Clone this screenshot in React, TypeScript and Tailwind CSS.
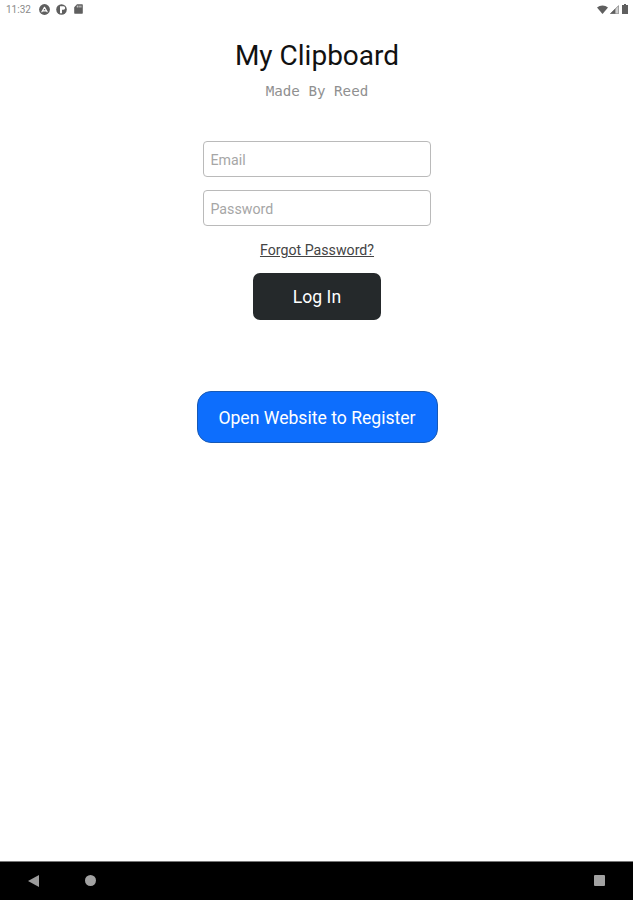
function StatusBar() {
    return (
        <div className="flex h-[18px] items-center justify-between pl-[6px] pr-1 text-[#5f5f5f]">
            <div className="flex items-center">
                <span className="w-[26px] whitespace-nowrap pt-px text-[10px] leading-[17px] text-[#8a8a8a]">11:32</span>
                <svg className="ml-[7px]" width="11" height="11" viewBox="0 0 11 11">
                    <circle cx="5.5" cy="5.5" r="5.4" fill="currentColor" />
                    <path d="M2.9 7.8 5.5 3.3l2.6 4.5M4.1 6.8h2.8" fill="none" stroke="#fff" strokeWidth="1.2" strokeLinecap="round" strokeLinejoin="round" />
                </svg>
                <svg className="ml-[6px]" width="11" height="11" viewBox="0 0 11 11">
                    <circle cx="5.5" cy="5.5" r="5.3" fill="currentColor" />
                    <path d="M4 2.2h3.4a1.8 1.8 0 0 1 0 3.6H6v3.4H4z" fill="#fff" />
                </svg>
                <svg className="ml-[7px]" width="9" height="10" viewBox="0 0 9 10">
                    <path d="M3 .3h5.2a.6.6 0 0 1 .6.6v8.2a.6.6 0 0 1-.6.6H.8a.6.6 0 0 1-.6-.6V3.2z" fill="currentColor" />
                    <path d="M3.3 1.6v1.9M5.1 1.6v1.9M6.9 1.6v1.9" stroke="#fff" strokeWidth=".8" />
                </svg>
            </div>
            <div className="flex items-center">
                <svg width="11" height="9" viewBox="0 0 11 9">
                    <path d="M0 2.4a8.5 8.5 0 0 1 11 0L5.5 9z" fill="currentColor" />
                </svg>
                <svg className="ml-[2px]" width="9" height="9" viewBox="0 0 9 9">
                    <path d="M8.7.2v8.6H.1z" fill="#d0d0d0" />
                    <path d="M5.4 3.5v5.3H.1z" fill="currentColor" />
                    <path d="M8.6.6v8.1H.5z" fill="none" stroke="currentColor" strokeWidth=".5" />
                </svg>
                <svg className="ml-[3px] mr-px" width="6" height="10" viewBox="0 0 6 10">
                    <path d="M2 0h2v1h2v9H0V1h2z" fill="currentColor" />
                </svg>
            </div>
        </div>
    );
}

function NavBar() {
    return (
        <div className="flex h-[39px] items-center justify-between border-t border-[#777] bg-black pb-px pl-[28px] pr-[28px] text-[#9c9c9c]">
            <div className="flex items-center">
                <svg width="11" height="12" viewBox="0 0 11 12">
                    <path d="M11 0v12L0 6z" fill="currentColor" />
                </svg>
                <div className="ml-[46px] h-[11px] w-[11px] rounded-full bg-[#a2a2a2]" />
            </div>
            <div className="h-[11px] w-[11px] rounded-[1px] bg-[#a2a2a2]" />
        </div>
    );
}

export default function App() {
    return (
        <div className="flex h-[900px] w-[633px] flex-col overflow-hidden bg-white font-['Roboto',sans-serif]">
            <StatusBar />

            <main className="flex flex-1 flex-col items-center pl-px pt-[20px]">
                <h1 className="text-[28px] leading-[36px] text-[#111]">My Clipboard</h1>
                <p className="mt-[7px] font-['DejaVu_Sans_Mono',monospace] text-[14.2px] leading-[20px] text-[#909090]">
                    Made By Reed
                </p>

                <input
                    type="email"
                    placeholder="Email"
                    className="mt-[40px] h-[36px] w-[228px] rounded-[4px] border border-[#bababa] px-[6.5px] pt-[2px] text-[14.2px] text-[#222] placeholder:text-[#a6a6a6]"
                />
                <input
                    type="password"
                    placeholder="Password"
                    className="mt-[13px] h-[36px] w-[228px] rounded-[4px] border border-[#bababa] px-[6.5px] pt-[2px] text-[14.2px] text-[#222] placeholder:text-[#a6a6a6]"
                />

                <a className="mt-[14px] text-[14.2px] leading-[20px] text-[#444] underline">Forgot Password?</a>

                <button className="mt-[13px] h-[47px] w-[128px] rounded-[7px] bg-[#25292b] pt-[2px] text-[17.6px] text-white">
                    Log In
                </button>

                <button className="mt-[71px] h-[52px] w-[241px] rounded-[14px] border border-[#1759b5] bg-[#0d6efd] pt-[2px] text-[17.6px] text-white">
                    Open Website to Register
                </button>
            </main>

            <NavBar />
        </div>
    );
}
